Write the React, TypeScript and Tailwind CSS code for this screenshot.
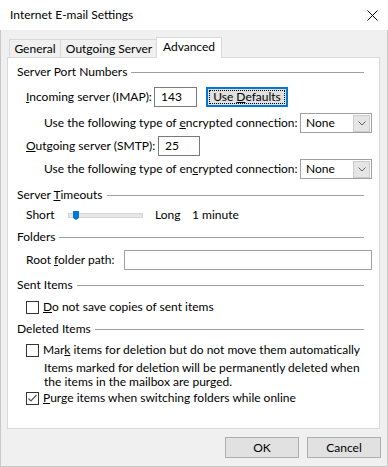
import React from 'react';

const GroupHeader = ({ children, className = '' }: { children: React.ReactNode; className?: string }) => (
  <div className={`flex items-center h-[16px] pr-[8px] ${className}`}>
    <span className="whitespace-nowrap">{children}</span>
    <div className="flex-1 h-px bg-[#a0a0a0] ml-[4px]" />
  </div>
);

const TextBox = ({ value, className = '' }: { value?: string; className?: string }) => (
  <div className={`h-[20px] border border-[#7a7a7a] bg-white flex items-center pl-[6px] ${className}`}>
    {value}
  </div>
);

const Select = () => (
  <div className="ml-auto w-[72px] h-[20px] border border-[#a0a0a0] bg-white flex items-center pl-[5px] pr-px">
    <span className="flex-1">None</span>
    <div className="w-[17px] h-[17px] bg-[#e5e5e5] border border-[#cccccc] flex items-center justify-center">
      <svg width="8" height="5" viewBox="0 0 8 5">
        <path d="M0.5 0.5 L4 4 L7.5 0.5" fill="none" stroke="#606060" strokeWidth="1" />
      </svg>
    </div>
  </div>
);

const Checkbox = ({ checked = false }: { checked?: boolean }) => (
  <div className="w-[13px] h-[13px] border border-[#333333] bg-white flex items-center justify-center shrink-0">
    {checked && (
      <svg width="11" height="11" viewBox="0 0 11 11">
        <path d="M1.5 5.5 L4 8 L9.5 2" fill="none" stroke="#555555" strokeWidth="1.2" />
      </svg>
    )}
  </div>
);

const Button = ({ children }: { children: React.ReactNode }) => (
  <div className="w-[74px] h-[21px] bg-[#e1e1e1] border border-[#adadad] flex items-center justify-center">
    {children}
  </div>
);

export default function App() {
  return (
    <div className="w-[388px] h-[467px] flex flex-col bg-[#f0f0f0] text-[12px] leading-[16px] text-black font-['Lato',sans-serif]">
      {/* Title bar */}
      <div className="h-[30px] bg-white flex items-center pl-[10px] pr-[10px] shrink-0">
        <span className="flex-1">Internet E-mail Settings</span>
        <svg width="11" height="11" viewBox="0 0 11 11">
          <path d="M0.5 0.5 L10.5 10.5 M10.5 0.5 L0.5 10.5" stroke="#000" strokeWidth="1" />
        </svg>
      </div>

      <div className="flex-1 flex flex-col border-l border-r border-b border-[#c8c8c8]">
        {/* Tabs */}
        <div className="h-[27px] flex items-end pl-[8px] shrink-0">
          <div className="w-[52px] h-[18px] border-l border-t border-r border-[#d9d9d9] flex items-center justify-center">
            General
          </div>
          <div className="w-[97px] h-[18px] border-t border-r border-[#d9d9d9] flex items-center justify-center">
            Outgoing Server
          </div>
          <div className="relative z-10 -ml-[2px] -mb-px w-[66px] h-[21px] bg-white border-l border-t border-r border-[#d9d9d9] flex items-start justify-center pt-[1px]">
            Advanced
          </div>
        </div>

        {/* Panel */}
        <div className="ml-[6px] w-[373px] h-[372px] bg-white border border-[#d9d9d9] pl-[9px] pr-[7px] flex flex-col shrink-0">
          <GroupHeader className="mt-[6px]">Server Port Numbers</GroupHeader>

          <div className="mt-[7px] h-[20px] flex items-center pl-[9px]">
            <span className="w-[128px]"><u>I</u>ncoming server (IMAP):</span>
            <TextBox value="143" className="w-[43px]" />
            <div className="ml-[9px] w-[82px] h-[20px] border-2 border-[#0078d7] bg-[#e1e1e1] p-px">
              <div className="w-full h-full border border-dotted border-black flex items-center justify-center">
                <span>Use <u>D</u>efaults</span>
              </div>
            </div>
          </div>

          <div className="mt-[6px] h-[20px] flex items-center pl-[27px]">
            <span className="whitespace-nowrap">Use the following type of <u>e</u>ncrypted connection:</span>
            <Select />
          </div>

          <div className="mt-[3px] h-[20px] flex items-center pl-[9px]">
            <span className="w-[132px]"><u>O</u>utgoing server (SMTP):</span>
            <TextBox value="25" className="w-[42px]" />
          </div>

          <div className="mt-[3px] h-[20px] flex items-center pl-[27px]">
            <span className="whitespace-nowrap">Use the following type of en<u>c</u>rypted connection:</span>
            <Select />
          </div>

          <GroupHeader className="mt-[8px]">Server <u>T</u>imeouts</GroupHeader>

          <div className="mt-[4px] h-[16px] flex items-center pl-[9px]">
            <span className="w-[42px]">Short</span>
            <div className="relative w-[75px] h-[5px] bg-[#e7e7e7] border border-[#d6d6d6]">
              <svg className="absolute left-[4px] -top-[3px]" width="6" height="9" viewBox="0 0 6 9">
                <path d="M0 0 H6 V7 L3 9 L0 7 Z" fill="#0078d7" />
              </svg>
            </div>
            <span className="ml-[12px] w-[37px]">Long</span>
            <span>1 minute</span>
          </div>

          <GroupHeader className="mt-[6px]">Folders</GroupHeader>

          <div className="mt-[5px] h-[20px] flex items-center pl-[9px]">
            <span className="w-[98px]">Root <u>f</u>older path:</span>
            <div className="flex-1 h-[20px] border border-[#a0a0a0] bg-white" />
          </div>

          <GroupHeader className="mt-[7px]">Sent Items</GroupHeader>

          <div className="mt-[6px] h-[16px] flex items-center pl-[9px]">
            <Checkbox />
            <span className="ml-[4px]"><u>D</u>o not save copies of sent items</span>
          </div>

          <GroupHeader className="mt-[6px]">Deleted Items</GroupHeader>

          <div className="mt-[5px] h-[16px] flex items-center pl-[9px]">
            <Checkbox />
            <span className="ml-[4px] whitespace-nowrap">Mar<u>k</u> items for deletion but do not move them automatically</span>
          </div>

          <div className="mt-[3px] pl-[27px] leading-[14px] whitespace-nowrap">
            <div>Items marked for deletion will be permanently deleted when</div>
            <div>the items in the mailbox are purged.</div>
          </div>

          <div className="mt-[1px] h-[16px] flex items-center pl-[9px]">
            <Checkbox checked />
            <span className="ml-[4px]"><u>P</u>urge items when switching folders while online</span>
          </div>
        </div>

        {/* Buttons */}
        <div className="mt-[8px] flex justify-end gap-[8px] pr-[6px]">
          <Button>OK</Button>
          <Button>Cancel</Button>
        </div>
      </div>
    </div>
  );
}
